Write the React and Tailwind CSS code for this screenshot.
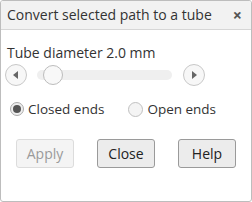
import React, { useState } from "react";

export default function App() {
  const [closed, setClosed] = useState(true);

  return (
    <div className="w-[252px] h-[202px] bg-white text-[#333] font-['Open_Sans','Liberation_Sans',sans-serif]">
      <div className="h-full flex flex-col border border-[#bdbdbd] rounded-[3px] overflow-hidden">
        <div className="h-[29px] shrink-0 flex items-center justify-between pl-[6px] pr-[9px] bg-[#f2f2f2] border-b border-[#d6d6d6]">
          <span className="text-[14px] leading-none">Convert selected path to a tube</span>
          <span className="text-[16px] leading-none font-bold text-[#555]">×</span>
        </div>
        <div className="flex flex-col pl-[6px] pr-[8px]">
          <div className="mt-[14px] text-[14px] leading-[18px]">Tube diameter 2.0 mm</div>
          <div className="mt-[2px] flex items-center h-[22px]">
            <button className="-ml-[2px] w-[22px] h-[22px] rounded-full border border-[#c8c8c8] bg-[#f7f7f7] flex items-center justify-center">
              <svg width="6" height="8" viewBox="0 0 6 8"><path d="M5 0 L0 4 L5 8 Z" fill="#666" /></svg>
            </button>
            <div className="relative ml-[10px] w-[135px] h-[10px] rounded-full bg-[#efefef]">
              <div className="absolute left-[6px] top-[-5px] w-[20px] h-[20px] rounded-full border border-[#bcbcbc] bg-[#f8f8f8]" />
            </div>
            <button className="ml-[11px] w-[22px] h-[22px] rounded-full border border-[#c8c8c8] bg-[#f7f7f7] flex items-center justify-center">
              <svg width="6" height="8" viewBox="0 0 6 8"><path d="M1 0 L6 4 L1 8 Z" fill="#666" /></svg>
            </button>
          </div>
          <div className="mt-[14px] flex items-center text-[13.5px] leading-[18px]">
            <label className="ml-[3px] flex items-center cursor-pointer" onClick={() => setClosed(true)}>
              <span className="w-[14px] h-[14px] rounded-full border border-[#aaa] bg-[#eee] flex items-center justify-center">
                {closed && <span className="w-[8px] h-[8px] rounded-full bg-[#555]" />}
              </span>
              <span className="ml-[4px]">Closed ends</span>
            </label>
            <label className="ml-[24px] flex items-center cursor-pointer" onClick={() => setClosed(false)}>
              <span className="w-[15px] h-[15px] rounded-full border border-[#c0c0c0] bg-[#f4f4f4] flex items-center justify-center">
                {!closed && <span className="w-[8px] h-[8px] rounded-full bg-[#555]" />}
              </span>
              <span className="ml-[4px]">Open ends</span>
            </label>
          </div>
          <div className="mt-[21px] pl-[9px] flex gap-[23px] text-[14px]">
            <button disabled className="w-[58px] h-[29px] rounded-[3px] border border-[#dcdcdc] bg-[#f4f4f4] text-[#9a9a9a]">Apply</button>
            <button className="w-[58px] h-[29px] rounded-[3px] border border-[#9a9a9a] bg-[#ececec] text-[#222]">Close</button>
            <button className="w-[58px] h-[29px] rounded-[3px] border border-[#9a9a9a] bg-[#ececec] text-[#222]">Help</button>
          </div>
        </div>
      </div>
    </div>
  );
}
